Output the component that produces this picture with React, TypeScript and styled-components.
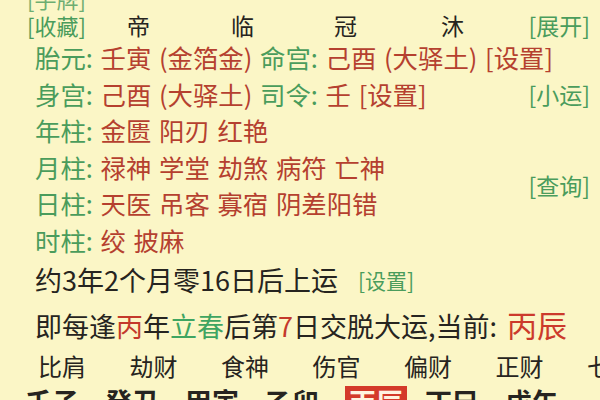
import React from "react";
import styled, { createGlobalStyle } from "styled-components";

const GREEN = "#4a9c5c";
const RED = "#b5402f";
const INK = "#262420";

const GlobalStyle = createGlobalStyle`
  html, body {
    margin: 0;
    padding: 0;
    background: #fbf6c6;
  }
`;

const stages = ["帝", "临", "冠", "沐"];

const infoRows: { label: string; parts: string[] }[] = [
  { label: "年柱", parts: ["金匮", "阳刃", "红艳"] },
  { label: "月柱", parts: ["禄神", "学堂", "劫煞", "病符", "亡神"] },
  { label: "日柱", parts: ["天医", "吊客", "寡宿", "阴差阳错"] },
  { label: "时柱", parts: ["绞", "披麻"] },
];

const tenGods = ["比肩", "劫财", "食神", "伤官", "偏财", "正财", "七杀"];
const pillars = ["壬子", "癸丑", "甲寅", "乙卯", "丙辰", "丁巳", "戊午"];
const CURRENT = "丙辰";

function App() {
  return (
    <>
      <GlobalStyle />
      <Page>
        <HeaderRow>
          <Tag>[手牌]</Tag>
        </HeaderRow>

        <StarRow>
          <StarTag>[收藏]</StarTag>
          <StageList>
            {stages.map((s) => (
              <Stage key={s}>{s}</Stage>
            ))}
          </StageList>
          <SideTag>[展开]</SideTag>
        </StarRow>

        <InfoGrid>
          <InfoLine>
            <Label>胎元:</Label> <Value>壬寅 (金箔金)</Value> <Label>命宫:</Label>{" "}
            <Value>己酉 (大驿土)</Value> <Value>[设置]</Value>
          </InfoLine>
          <InfoLine>
            <Label>身宫:</Label> <Value>己酉 (大驿土)</Value> <Label>司令:</Label>{" "}
            <Value>壬</Value> <Value>[设置]</Value>
          </InfoLine>
          <SideTag $row="2">[小运]</SideTag>
          {infoRows.map((r) => (
            <InfoLine key={r.label}>
              <Label>{r.label}:</Label> <Value>{r.parts.join(" ")}</Value>
            </InfoLine>
          ))}
          <SideTag $row="4 / 6">[查询]</SideTag>
        </InfoGrid>

        <StartLine>
          约3年2个月零16日后上运 <SmallTag>[设置]</SmallTag>
        </StartLine>

        <StartLine>
          即每逢<Red>丙</Red>年<Green>立春</Green>后第<Red>7</Red>日交脱大运,当前:{" "}
          <Current>丙辰</Current>
        </StartLine>

        <GodRow>
          {tenGods.map((g) => (
            <God key={g}>{g}</God>
          ))}
        </GodRow>

        <PillarRow>
          {pillars.map((p) => (
            <Pillar key={p} $active={p === CURRENT}>
              {p}
            </Pillar>
          ))}
        </PillarRow>
      </Page>
    </>
  );
}

export default App;

const Page = styled.div`
  width: 600px;
  height: 400px;
  overflow: hidden;
  background: #fbf6c6;
  color: ${INK};
  font-family: "Noto Sans CJK SC", "Noto Sans", sans-serif;
  box-sizing: border-box;
  padding: 0 10px 0 27px;
`;

const HeaderRow = styled.div`
  display: flex;
  height: 11px;
  align-items: flex-end;
`;

const Tag = styled.span`
  color: ${GREEN};
  font-size: 22px;
  line-height: 26px;
  opacity: 0.8;
`;

const StarRow = styled.div`
  display: flex;
  align-items: center;
  height: 28px;
  line-height: 28px;
`;

const StarTag = styled.span`
  flex: 0 0 100px;
  color: ${GREEN};
  font-size: 22px;
`;

const StageList = styled.div`
  display: grid;
  grid-template-columns: 104px 103px 107px auto;
`;

const Stage = styled.span`
  font-size: 23px;
  color: ${INK};
`;

const SideTag = styled.span<{ $row?: string }>`
  margin-left: auto;
  color: ${GREEN};
  font-size: 23px;
  grid-column: 2;
  grid-row: ${({ $row }) => $row ?? "auto"};
  align-self: center;
  white-space: nowrap;
`;

const InfoGrid = styled.div`
  display: grid;
  grid-template-columns: minmax(0, 1fr) auto;
  grid-auto-rows: 36.5px;
  align-items: center;
  padding-left: 8px;
`;

const InfoLine = styled.div`
  grid-column: 1;
  font-size: 25.4px;
  line-height: 36.5px;
  word-spacing: 2px;
  white-space: nowrap;
`;

const Label = styled.span`
  color: ${GREEN};
`;

const Value = styled.span`
  color: ${RED};
`;

const StartLine = styled.div`
  padding-left: 8px;
  font-size: 27px;
  line-height: 44px;
  height: 44px;
  white-space: nowrap;
  &:first-of-type {
    height: 42px;
  }
`;

const SmallTag = styled.span`
  color: ${GREEN};
  font-size: 21px;
  margin-left: 14px;
  vertical-align: 2px;
`;

const Red = styled.span`
  color: #c4392b;
`;

const Green = styled.span`
  color: #3fa561;
`;

const Current = styled.span`
  color: #cc3a2c;
  font-size: 30px;
  margin-left: 4px;
`;

const GodRow = styled.div`
  display: grid;
  grid-template-columns: repeat(7, 91.5px);
  padding-left: 11px;
  height: 40px;
  line-height: 40px;
  font-size: 24px;
`;

const God = styled.span`
  white-space: nowrap;
`;

const PillarRow = styled.div`
  display: grid;
  grid-template-columns: repeat(7, 80px);
  margin-left: -2px;
  line-height: 32px;
  font-size: 27px;
  font-weight: 700;
`;

const Pillar = styled.span<{ $active: boolean }>`
  justify-self: start;
  padding: 0 ${({ $active }) => ($active ? "4px" : "0")};
  background: ${({ $active }) => ($active ? "#d43a2a" : "transparent")};
  color: ${({ $active }) => ($active ? "#fff3e0" : INK)};
`;
